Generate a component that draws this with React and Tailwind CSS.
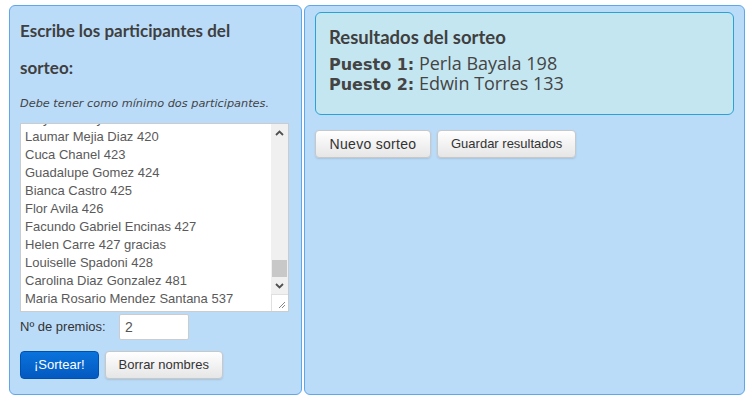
import React from 'react'

const nombres = [
  'Mayra Godoy 419',
  'Laumar Mejia Diaz 420',
  'Cuca Chanel 423',
  'Guadalupe Gomez 424',
  'Bianca Castro 425',
  'Flor Avila 426',
  'Facundo Gabriel Encinas 427',
  'Helen Carre 427 gracias',
  'Louiselle Spadoni 428',
  'Carolina Diaz Gonzalez 481',
  'Maria Rosario Mendez Santana 537',
]

const btn =
  'h-[28px] px-[13px] whitespace-nowrap rounded-[4px] border border-[#c8c8c8] bg-gradient-to-b from-white to-[#e6e6e6] text-[13px] text-[#333] shadow-[0_1px_2px_rgba(0,0,0,0.12)] font-["Liberation_Sans",Arial,sans-serif]'

function FakeScrollbar() {
  return (
    <div className="w-[17px] flex flex-col bg-[#f0f0f0]">
      <div className="h-[17px] flex items-center justify-center">
        <svg width="9" height="6" viewBox="0 0 9 6"><path d="M1 5 L4.5 1.5 L8 5" stroke="#505050" strokeWidth="1.8" fill="none" /></svg>
      </div>
      <div className="flex-1 flex flex-col justify-end">
        <div className="h-[17px] mx-[1px] bg-[#c8c8c8]" />
      </div>
      <div className="h-[17px] flex items-center justify-center">
        <svg width="9" height="6" viewBox="0 0 9 6"><path d="M1 1 L4.5 4.5 L8 1" stroke="#505050" strokeWidth="1.8" fill="none" /></svg>
      </div>
      <div className="h-[17px] bg-white border-t border-l border-[#e0e0e0] relative">
        <svg className="absolute right-[2px] bottom-[2px]" width="9" height="9" viewBox="0 0 9 9">
          <path d="M8 2 L2 8 M8 5 L5 8" stroke="#888" strokeWidth="1" />
        </svg>
      </div>
    </div>
  )
}

export default function App() {
  return (
    <div className="w-[752px] h-[402px] bg-white flex gap-[2px] pt-[5px] pl-[9px] font-['Liberation_Sans',Arial,sans-serif]">
      {/* Participantes */}
      <div className="w-[293px] h-[390px] rounded-[6px] border border-[#5fa6ea] bg-[#bbdcf9] px-[10px]">
        <h2 className="mt-[6px] w-[240px] text-[17px] leading-[37px] font-bold text-[#3f3f3f] font-['Lato',sans-serif]">
          Escribe los participantes del sorteo:
        </h2>
        <p className="mt-[10px] text-[11.3px] leading-[16px] italic text-[#444] font-['DejaVu_Sans',sans-serif]">
          Debe tener como mínimo dos participantes.
        </p>
        <div className="mt-[11px] h-[189px] w-[269px] flex bg-white border border-[#cccccc] overflow-hidden">
          <div className="flex-1 overflow-hidden pl-[4px]">
            <div className="mt-[-14px] text-[13px] leading-[18px] text-[#5a5a5a]">
              {nombres.map((n) => (
                <div key={n} className="whitespace-nowrap">{n}</div>
              ))}
            </div>
          </div>
          <FakeScrollbar />
        </div>
        <div className="mt-[2px] flex items-center">
          <span className="w-[99px] text-[13px] text-[#333]">Nº de premios:</span>
          <div className="w-[70px] h-[26px] bg-white border border-[#cccccc] rounded-[2px] flex items-center px-[5px] text-[14px] text-[#555]">2</div>
        </div>
        <div className="mt-[11px] flex gap-[6px]">
          <button className="h-[28px] px-[13px] rounded-[4px] border border-[#0050b0] bg-gradient-to-b from-[#0a73dc] to-[#0459c0] text-[13px] text-white">
            ¡Sortear!
          </button>
          <button className={btn}>Borrar nombres</button>
        </div>
      </div>

      {/* Resultados */}
      <div className="w-[441px] h-[390px] rounded-[6px] border border-[#5fa6ea] bg-[#bbdcf9] px-[10px] pt-[6px]">
        <div className="h-[103px] rounded-[6px] border border-[#2aa2d6] bg-[#c4e6f1] px-[13px] pt-[13px]">
          <h3 className="text-[18.5px] leading-[22px] font-bold text-[#3f3f3f] font-['Lato',sans-serif]">Resultados del sorteo</h3>
          <div className="mt-[6px] text-[18px] leading-[18px] text-[#444] font-['Open_Sans',sans-serif]">
            <div><b className="font-['DejaVu_Sans',serif] font-bold text-[16px]">Puesto 1:</b> Perla Bayala 198</div>
            <div><b className="font-['DejaVu_Sans',serif] font-bold text-[16px]">Puesto 2:</b> Edwin Torres 133</div>
          </div>
        </div>
        <div className="mt-[15px] flex gap-[6px]">
          <button className={`${btn} w-[116px] !px-0 !text-[14px] tracking-[0.3px]`}>Nuevo sorteo</button>
          <button className={btn}>Guardar resultados</button>
        </div>
      </div>
    </div>
  )
}
